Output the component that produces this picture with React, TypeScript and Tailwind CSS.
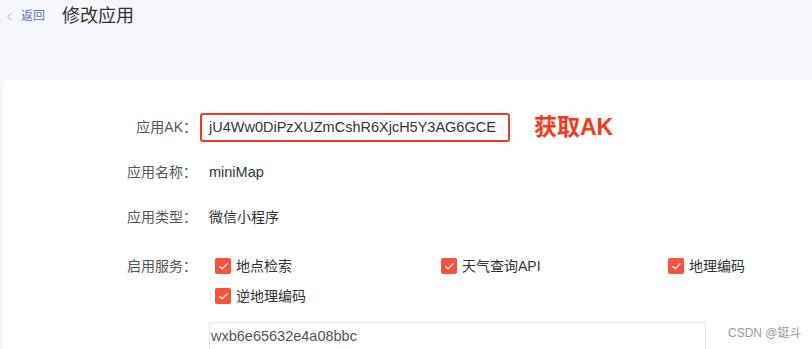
import { Check, ChevronLeft } from 'lucide-react';

const services = [
  ['地点检索', '天气查询API', '地理编码'],
  ['逆地理编码'],
];

function Box({ label }: { label: string }) {
  return (
    <label className="flex items-center gap-[5px] whitespace-nowrap text-[14px] text-[#333]">
      <span className="flex h-[16px] w-[16px] shrink-0 items-center justify-center rounded-[2px] bg-[#f5523f]">
        <Check size={11} strokeWidth={2.5} className="text-white" />
      </span>
      {label}
    </label>
  );
}

export default function App() {
  const font = { fontFamily: '"Liberation Sans", "Noto Sans CJK SC", sans-serif' };
  return (
    <div className="h-[349px] w-[812px] overflow-hidden bg-[#f5f6fa]" style={font}>
      {/* header */}
      <div className="flex h-[32px] items-center pl-[3px]">
        <ChevronLeft size={13} strokeWidth={1.5} className="text-[#7d8cc4]" />
        <span className="ml-[5px] text-[12px] text-[#5b73c4]">返回</span>
        <h1 className="ml-[17px] text-[18px] text-[#333]">修改应用</h1>
      </div>

      <div className="ml-[3px] mt-[48px] rounded-tl-[4px] bg-white pt-[33px]">
        <div className="flex h-[29px] items-center">
          <div className="w-[194px] text-right text-[14px] text-[#555]">应用AK：</div>
          <div className="ml-[3px] flex h-[29px] w-[310px] items-center rounded-[3px] border-2 border-[#ee3a24] pl-[7px] text-[14.5px] text-[#333]">
            jU4Ww0DiPzXUZmCshR6XjcH5Y3AG6GCE
          </div>
          <div
            className="ml-[24px] text-[23px] leading-none font-bold text-[#f23b1c]"
            style={{ textShadow: '0 0 2px #fff, 0 0 3px #ddd' }}
          >
            获取AK
          </div>
        </div>

        <div className="mt-[16px] flex h-[29px] items-center text-[14px]">
          <div className="w-[194px] text-right text-[#555]">应用名称：</div>
          <div className="ml-[12px] text-[14.5px] text-[#333]">miniMap</div>
        </div>

        <div className="mt-[16px] flex h-[29px] items-center text-[14px]">
          <div className="w-[194px] text-right text-[#555]">应用类型：</div>
          <div className="ml-[12px] text-[#333]">微信小程序</div>
        </div>

        <div className="mt-[19px] flex text-[14px]">
          <div className="flex h-[30px] w-[194px] items-center justify-end text-[#555]">启用服务：</div>
          <div className="ml-[18px] flex flex-col">
            {services.map((row, i) => (
              <div key={i} className="grid h-[30px] w-[560px] grid-cols-[226px_227px_1fr] items-center">
                {row.map(s => (
                  <Box key={s} label={s} />
                ))}
              </div>
            ))}
          </div>
        </div>

        <div className="mt-[11px] flex items-start">
          <div className="ml-[206px] flex h-[40px] w-[497px] items-start rounded-tl-[3px] border border-b-0 border-[#e4e6eb] pl-[1px] pt-[3px] text-[14.5px] text-[#555]">
            wxb6e65632e4a08bbc
          </div>
          <div className="ml-[22px] mt-[2px] text-[12px] text-[#999]">CSDN @鋌斗</div>
        </div>
      </div>
    </div>
  );
}
